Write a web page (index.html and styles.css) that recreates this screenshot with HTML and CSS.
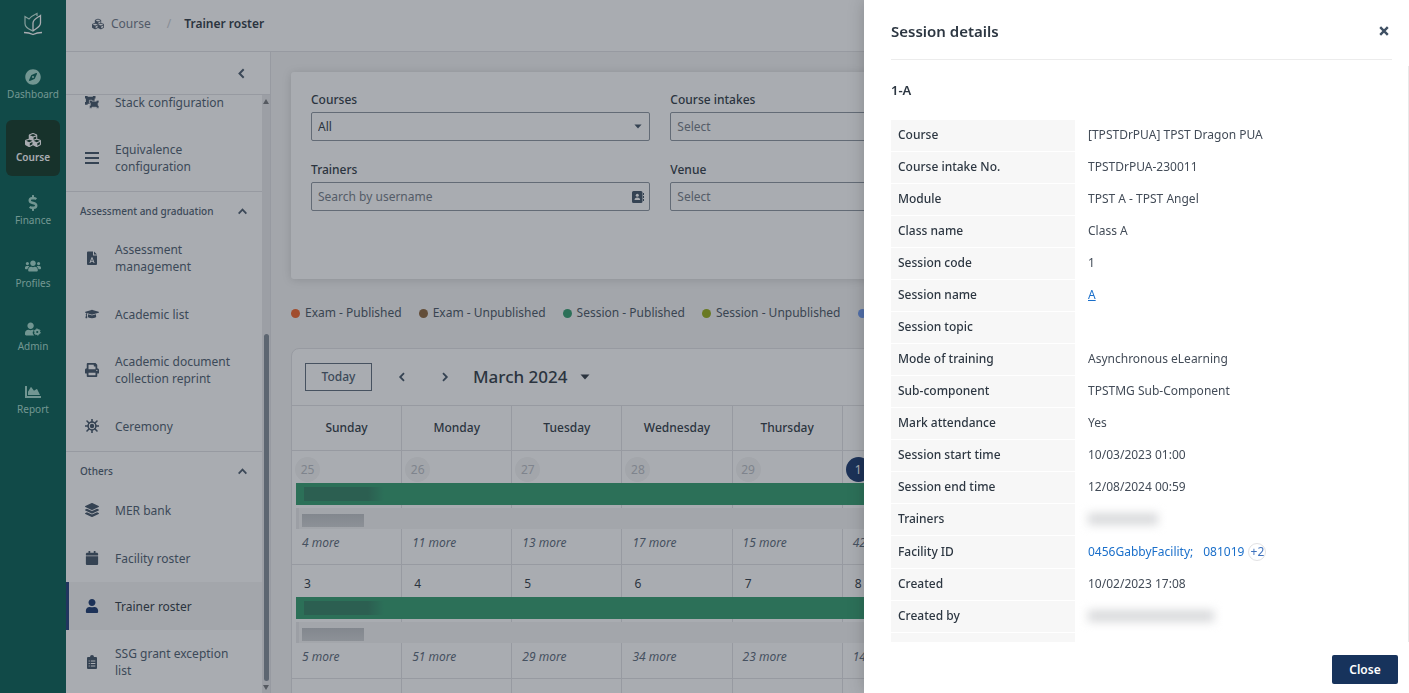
FILE: index.html
```html
<!DOCTYPE html>
<html lang="en">
<head>
    <meta charset="UTF-8">
    <meta name="viewport" content="width=device-width, initial-scale=1.0">
    <title>Trainer roster</title>
    <link rel="stylesheet" href="styles.css">
</head>
<body>
    <!-- Shared icons -->
    <svg class="sprite" aria-hidden="true">
        <symbol id="i-cubes" viewBox="0 0 512 512"><path d="M488.600 250.200L392 214V105.500c0-15-9.300-28.400-23.400-33.700l-100-37.500c-8.100-3.100-17.100-3.100-25.300 0l-100 37.500c-14.100 5.300-23.400 18.700-23.400 33.700V214l-96.600 36.200C9.300 255.500 0 268.900 0 283.900V394c0 13.600 7.700 26.100 19.900 32.200l100 50c10.100 5.100 22.100 5.100 32.200 0l103.900-52 103.900 52c10.100 5.100 22.100 5.100 32.200 0l100-50c12.200-6.100 19.900-18.600 19.900-32.200V283.900c0-15-9.300-28.400-23.400-33.700zM358 214.800l-85 31.900v-68.200l85-37v73.300zM154 104.100l102-38.200 102 38.200v.6l-102 41.400-102-41.400v-.6zm84 291.100l-85 42.500v-79.100l85-38.800v75.400zm0-112l-102 41.400-102-41.400v-.6l102-38.200 102 38.200v.6zm240 112l-85 42.500v-79.100l85-38.800v75.400zm0-112l-102 41.400-102-41.400v-.6l102-38.200 102 38.200v.6z"/></symbol>
        <symbol id="i-up" viewBox="0 0 10 10"><path d="M1.500 7L5 3.300L8.500 7" fill="none" stroke="currentColor" stroke-width="1.600"/></symbol>
        <symbol id="i-left" viewBox="0 0 10 10"><path d="M7 1.200L3.200 5L7 8.800" fill="none" stroke="currentColor" stroke-width="1.800"/></symbol>
        <symbol id="i-right" viewBox="0 0 10 10"><path d="M3 1.200L6.800 5L3 8.800" fill="none" stroke="currentColor" stroke-width="1.800"/></symbol>
        <symbol id="i-down" viewBox="0 0 10 6"><path d="M0.500 0.500h9L5 5.500z"/></symbol>
        <symbol id="i-user" viewBox="0 0 448 512"><path d="M224 256c70.700 0 128-57.300 128-128S294.700 0 224 0 96 57.300 96 128s57.300 128 128 128zm89.600 32h-16.700c-22.200 10.200-46.900 16-72.900 16s-50.600-5.800-72.900-16h-16.700C60.200 288 0 348.200 0 422.400V464c0 26.500 21.500 48 48 48h352c26.500 0 48-21.500 48-48v-41.600c0-74.200-60.200-134.400-134.400-134.400z"/></symbol>
    </svg>

    <div class="app">
        <nav class="nav">
            <a class="logo" href="#" aria-label="Home">
                <svg viewBox="0 0 18 24"><path d="M9 19.500V11c0-3.500 4-5 7.500-7.500V11c0 4-4 5-7.500 8M0 20.500c4 0 6 .5 9 2 3-1.500 5-2 9-2" fill="none" stroke="#fff" stroke-width="1.300"/><path d="M9 19c-4-2-8-3-8-7.500V4.500l4 2.500c2-3 5-4 8-5.500V4" fill="none" stroke="#c3e8dc" stroke-width="1.200"/></svg>
            </a>
            <a class="nav-item" href="#">
                <svg viewBox="0 0 496 512"><path d="M225.380 233.370c-12.500 12.500-12.500 32.760 0 45.250 12.490 12.500 32.760 12.500 45.250 0 12.500-12.500 12.500-32.760 0-45.250-12.500-12.490-32.760-12.490-45.250 0zM248 8C111.030 8 0 119.030 0 256s111.030 248 248 248 248-111.030 248-248S384.970 8 248 8zm126.140 148.050L308.170 300.400a31.938 31.938 0 0 1-15.770 15.770l-144.340 65.970c-16.650 7.610-33.810-9.550-26.200-26.200l65.980-144.350a31.938 31.938 0 0 1 15.770-15.770l144.340-65.970c16.650-7.600 33.800 9.550 26.190 26.200z"/></svg>
                Dashboard
            </a>
            <a class="nav-item active" href="#">
                <svg><use href="#i-cubes"/></svg>
                Course
            </a>
            <a class="nav-item" href="#">
                <svg viewBox="0 0 288 512"><path d="M209.200 233.400l-108-31.600C88.700 198.200 80 186.500 80 173.500c0-16.300 13.200-29.500 29.500-29.500h66.300c12.200 0 24.200 3.700 34.200 10.500 6.100 4.100 14.300 3.100 19.500-2l34.800-34c7.100-6.900 6.100-18.400-1.800-24.500C238 74.800 207.400 64.100 176 64V16c0-8.800-7.200-16-16-16h-32c-8.800 0-16 7.200-16 16v48h-2.500C45.800 64-5.400 118.700.5 183.600c4.200 46.100 39.400 83.600 83.800 96.600l102.500 30c12.500 3.700 21.200 15.300 21.200 28.300 0 16.300-13.200 29.500-29.500 29.500h-66.300C100 368 88 364.300 78 357.500c-6.100-4.100-14.300-3.100-19.500 2l-34.800 34c-7.100 6.900-6.100 18.400 1.800 24.500 24.500 19.200 55.100 29.900 86.500 30v48c0 8.800 7.200 16 16 16h32c8.800 0 16-7.200 16-16v-48.200c46.600-.9 90.300-28.600 105.700-72.700 21.500-61.600-14.600-124.800-72.500-141.700z"/></svg>
                Finance
            </a>
            <a class="nav-item" href="#">
                <svg viewBox="0 0 640 512"><path d="M96 224c35.300 0 64-28.700 64-64s-28.700-64-64-64-64 28.700-64 64 28.700 64 64 64zm448 0c35.300 0 64-28.700 64-64s-28.700-64-64-64-64 28.700-64 64 28.700 64 64 64zm32 32h-64c-17.600 0-33.500 7.100-45.100 18.600 40.300 22.100 68.900 62 75.100 109.400h66c17.700 0 32-14.300 32-32v-32c0-35.300-28.700-64-64-64zm-256 0c61.900 0 112-50.100 112-112S381.900 32 320 32 208 82.100 208 144s50.100 112 112 112zm76.800 32h-8.300c-20.800 10-43.900 16-68.500 16s-47.600-6-68.500-16h-8.300C179.600 288 128 339.600 128 403.200V432c0 26.500 21.500 48 48 48h288c26.500 0 48-21.500 48-48v-28.800c0-63.600-51.600-115.200-115.200-115.200zm-223.700-13.400C161.500 263.100 145.600 256 128 256H64c-35.300 0-64 28.700-64 64v32c0 17.700 14.300 32 32 32h65.900c6.300-47.400 34.900-87.300 75.200-109.400z"/></svg>
                Profiles
            </a>
            <a class="nav-item" href="#">
                <svg viewBox="0 0 640 512"><path d="M224 256c70.700 0 128-57.300 128-128S294.700 0 224 0 96 57.300 96 128s57.300 128 128 128zM313 288c-26 11-57 16-89 16s-63-5-89-16C60 288 0 348 0 422v42c0 26 21 48 48 48h322c-30-30-55-60-60-100-5-50 20-90 50-115-15-6-30-9-47-9z"/><circle cx="490" cy="376" r="80" fill="none" stroke="currentColor" stroke-width="72"/><circle cx="490" cy="376" r="126" fill="none" stroke="currentColor" stroke-width="34" stroke-dasharray="66 66"/></svg>
                Admin
            </a>
            <a class="nav-item" href="#">
                <svg viewBox="0 0 512 512"><path d="M500 384c6.600 0 12 5.400 12 12v40c0 6.600-5.400 12-12 12H12c-6.600 0-12-5.400-12-12V76c0-6.600 5.400-12 12-12h40c6.600 0 12 5.400 12 12v308h436zM372.700 159.500L288 216l-85.300-113.700c-5.100-6.800-15.500-6.300-19.900 1L96 248v104h384l-89.900-187.800c-3.200-6.500-11.400-8.700-17.400-4.700z"/></svg>
                Report
            </a>
        </nav>

        <div class="page">
            <header class="topbar">
                <a class="crumb" href="#"><svg><use href="#i-cubes"/></svg>Course</a>
                <span class="slash">/</span>
                <span class="crumb-current">Trainer roster</span>
            </header>

            <div class="body">
                <aside class="sidebar">
                    <div class="collapse">
                        <button type="button" aria-label="Collapse menu"><svg><use href="#i-left"/></svg></button>
                    </div>
                    <div class="menu-wrap">
                        <div class="menu">
                            <ul class="menu-scrolled">
                                <li><a href="#"><svg viewBox="0 0 16 14"><path d="M0 0h3v1h6V0h3v3h-1v4h1v2H3v1H0V7h1V3H0z"/><path d="M5 5h3v1h5V5h3v3h-1v3h1v3h-3v-1H8v1H5v-3h1V8H5z" stroke="#fff" stroke-width=".8"/></svg>Stack configuration</a></li>
                                <li><a href="#"><svg viewBox="0 0 14 14"><path d="M0 1h14v2h-14zM0 6h14v2h-14zM0 11h14v2h-14z"/></svg>Equivalence configuration</a></li>
                            </ul>
                            <button type="button" class="menu-title">Assessment and graduation<svg><use href="#i-up"/></svg></button>
                            <ul>
                                <li><a href="#"><svg viewBox="0 0 14 14"><path d="M2 1.500Q2 .5 3 .5H8V4.500h4V13q0 1-1 1H3q-1 0-1-1z"/><path d="M9 .5l3 3H9z"/><path d="M4.900 12L7 6.500L9.100 12M5.500 10.300h3" class="cut"/></svg>Assessment management</a></li>
                                <li><a href="#"><svg viewBox="0 0 640 512"><path d="M622.340 153.200L343.400 67.500c-15.200-4.670-31.600-4.670-46.790 0L17.660 153.200c-23.540 7.230-23.540 38.360 0 45.590l48.630 14.940c-10.670 13.190-17.230 29.280-17.880 46.900C38.780 266.150 32 276.110 32 288c0 10.780 5.680 19.850 13.860 25.650L20.330 428.530C18.110 438.520 25.710 448 35.940 448h56.110c10.240 0 17.840-9.480 15.620-19.470L82.140 313.650C90.320 307.850 96 298.780 96 288c0-11.570-6.470-21.250-15.660-26.870.76-15.020 8.440-28.300 20.690-36.720L296.600 284.500c9.060 2.780 26.440 6.250 46.790 0l278.950-85.700c23.550-7.240 23.550-38.360 0-45.600zM352.790 315.090c-28.530 8.760-52.840 3.920-65.590 0l-145.020-44.550L128 384c0 35.350 85.960 64 192 64s192-28.650 192-64l-14.180-113.470-145.030 44.560z"/></svg>Academic list</a></li>
                                <li><a href="#"><svg viewBox="0 0 512 512"><path d="M448 192V77.250c0-8.490-3.370-16.620-9.370-22.630L393.370 9.370c-6-6-14.140-9.370-22.630-9.370H96C78.330 0 64 14.330 64 32v160c-35.350 0-64 28.650-64 64v112c0 8.840 7.160 16 16 16h48v96c0 17.670 14.330 32 32 32h320c17.670 0 32-14.330 32-32v-96h48c8.840 0 16-7.160 16-16V256c0-35.350-28.650-64-64-64zm-64 256H128v-96h256v96zm0-224H128V64h192v48c0 8.840 7.160 16 16 16h48v96zm48 72c-13.250 0-24-10.750-24-24 0-13.260 10.750-24 24-24s24 10.740 24 24c0 13.250-10.750 24-24 24z"/></svg>Academic document collection reprint</a></li>
                                <li><a href="#"><svg viewBox="0 0 16 16"><circle cx="8" cy="8" r="4.500" fill="none" stroke="currentColor" stroke-width="1.800"/><circle cx="8" cy="8" r="2.500"/><path d="M8 0v3M8 13v3M0 8h3M13 8h3M2.300 2.300l2.200 2.200M11.500 11.500l2.200 2.200M2.300 13.700l2.200-2.200M11.500 4.500l2.200-2.200" stroke="currentColor" stroke-width="1.800" stroke-linecap="round"/></svg>Ceremony</a></li>
                            </ul>
                            <button type="button" class="menu-title">Others<svg><use href="#i-up"/></svg></button>
                            <ul>
                                <li><a href="#"><svg viewBox="0 0 512 512"><path d="M12.410 148.020l232.940 105.670c6.800 3.090 14.490 3.090 21.290 0l232.940-105.670c16.550-7.510 16.550-32.520 0-40.030L266.650 2.310a25.607 25.607 0 0 0-21.290 0L12.410 107.980c-16.550 7.510-16.550 32.530 0 40.040zm487.180 88.280l-58.090-26.330-161.640 73.270c-7.560 3.430-15.590 5.170-23.860 5.170s-16.290-1.740-23.860-5.170L70.510 209.970l-58.100 26.330c-16.550 7.500-16.550 32.500 0 40l232.940 105.590c6.800 3.080 14.490 3.080 21.290 0L499.590 276.300c16.550-7.500 16.550-32.500 0-40zm0 127.800l-57.870-26.230-161.860 73.370c-7.560 3.430-15.590 5.170-23.860 5.170s-16.290-1.740-23.860-5.170L70.290 337.870 12.410 364.100c-16.550 7.500-16.550 32.500 0 40l232.940 105.590c6.800 3.080 14.490 3.080 21.290 0L499.590 404.100c16.550-7.500 16.550-32.500 0-40z"/></svg>MER bank</a></li>
                                <li><a href="#"><svg viewBox="0 0 448 512"><path d="M12 192h424c6.600 0 12 5.400 12 12v260c0 26.500-21.500 48-48 48H48c-26.500 0-48-21.500-48-48V204c0-6.600 5.400-12 12-12zm436-44v-36c0-26.500-21.500-48-48-48h-48V12c0-6.600-5.400-12-12-12h-40c-6.600 0-12 5.400-12 12v52H160V12c0-6.600-5.400-12-12-12h-40c-6.600 0-12 5.400-12 12v52H48C21.500 64 0 85.500 0 112v36c0 6.600 5.400 12 12 12h424c6.600 0 12-5.400 12-12z"/></svg>Facility roster</a></li>
                                <li><a href="#" class="selected"><svg><use href="#i-user"/></svg>Trainer roster</a></li>
                                <li><a href="#"><svg viewBox="0 0 14 14"><path d="M3 2h2q0-2 2-2t2 2h2q1 0 1 1v10q0 1-1 1H3q-1 0-1-1V3q0-1 1-1z"/><path d="M5.800 6h4.500M5.800 8.500h4.500M5.800 11h4.500M3.700 6h1M3.700 8.500h1M3.700 11h1" class="cut"/></svg>SSG grant exception list</a></li>
                            </ul>
                        </div>
                        <div class="scrollbar" aria-hidden="true">
                            <svg viewBox="0 0 6 5"><path d="M3 0l3 5H0z"/></svg>
                            <div class="before"></div>
                            <div class="thumb"></div>
                            <svg viewBox="0 0 6 5"><path d="M0 0h6L3 5z"/></svg>
                        </div>
                    </div>
                </aside>

                <main class="content">
                    <form class="filters">
                        <div class="field">
                            <label for="courses">Courses</label>
                            <div class="control">
                                <select id="courses"><option>All</option></select>
                                <svg class="caret"><use href="#i-down"/></svg>
                            </div>
                        </div>
                        <div class="field">
                            <label for="intakes">Course intakes</label>
                            <div class="control">
                                <select id="intakes" class="empty"><option>Select</option></select>
                                <svg class="caret"><use href="#i-down"/></svg>
                            </div>
                        </div>
                        <div class="field">
                            <label for="modules">Modules</label>
                            <div class="control">
                                <select id="modules" class="empty"><option>Select</option></select>
                                <svg class="caret"><use href="#i-down"/></svg>
                            </div>
                        </div>
                        <div class="field">
                            <label for="trainers">Trainers</label>
                            <div class="control">
                                <input id="trainers" type="text" placeholder="Search by username">
                                <svg class="book" viewBox="0 0 12 12"><path d="M1.500 0h7.500q1.500 0 1.500 1.500v9q0 1.500-1.500 1.500h-7.500q-1.500 0-1.500-1.500v-9q0-1.500 1.500-1.500zM11 2h1v2h-1zM11 5h1v2h-1zM11 8h1v2h-1z"/><circle cx="5.300" cy="4.300" r="1.500" class="hole"/><path d="M2.500 9q0-2.600 2.800-2.600T8.100 9z" class="hole"/></svg>
                            </div>
                        </div>
                        <div class="field">
                            <label for="venue">Venue</label>
                            <div class="control">
                                <select id="venue" class="empty"><option>Select</option></select>
                                <svg class="caret"><use href="#i-down"/></svg>
                            </div>
                        </div>
                    </form>

                    <ul class="legend">
                        <li class="exam-published">Exam - Published</li>
                        <li class="exam-unpublished">Exam - Unpublished</li>
                        <li class="session-published">Session - Published</li>
                        <li class="session-unpublished">Session - Unpublished</li>
                        <li class="other">Others</li>
                    </ul>

                    <section class="calendar">
                        <div class="toolbar">
                            <button type="button" class="today">Today</button>
                            <button type="button" class="arrow" aria-label="Previous month"><svg><use href="#i-left"/></svg></button>
                            <button type="button" class="arrow" aria-label="Next month"><svg><use href="#i-right"/></svg></button>
                            <button type="button" class="month">March 2024<svg><use href="#i-down"/></svg></button>
                        </div>
                        <table class="month-grid">
                            <thead>
                                <tr>
                                    <th>Sunday</th>
                                    <th>Monday</th>
                                    <th>Tuesday</th>
                                    <th>Wednesday</th>
                                    <th>Thursday</th>
                                    <th>Friday</th>
                                    <th>Saturday</th>
                                </tr>
                            </thead>
                            <tbody>
                                <tr>
                                    <td><span class="date out">25</span><div class="event"><i></i></div><div class="event light"><i></i></div><a href="#">4 more</a></td>
                                    <td><span class="date out">26</span><div class="event"></div><div class="event light"></div><a href="#">11 more</a></td>
                                    <td><span class="date out">27</span><div class="event"></div><div class="event light"></div><a href="#">13 more</a></td>
                                    <td><span class="date out">28</span><div class="event"></div><div class="event light"></div><a href="#">17 more</a></td>
                                    <td><span class="date out">29</span><div class="event"></div><div class="event light"></div><a href="#">15 more</a></td>
                                    <td><span class="date now">1</span><div class="event"></div><div class="event light"></div><a href="#">42 more</a></td>
                                    <td><span class="date">2</span><div class="event"></div><div class="event light"></div><a href="#">12 more</a></td>
                                </tr>
                                <tr>
                                    <td><span class="date">3</span><div class="event"><i></i></div><div class="event light"><i></i></div><a href="#">5 more</a></td>
                                    <td><span class="date">4</span><div class="event"></div><div class="event light"></div><a href="#">51 more</a></td>
                                    <td><span class="date">5</span><div class="event"></div><div class="event light"></div><a href="#">29 more</a></td>
                                    <td><span class="date">6</span><div class="event"></div><div class="event light"></div><a href="#">34 more</a></td>
                                    <td><span class="date">7</span><div class="event"></div><div class="event light"></div><a href="#">23 more</a></td>
                                    <td><span class="date">8</span><div class="event"></div><div class="event light"></div><a href="#">14 more</a></td>
                                    <td><span class="date">9</span><div class="event"></div><div class="event light"></div><a href="#">12 more</a></td>
                                </tr>
                                <tr>
                                    <td></td><td></td><td></td><td></td><td></td><td></td><td></td>
                                </tr>
                            </tbody>
                        </table>
                    </section>
                </main>
            </div>
        </div>
    </div>

    <div class="backdrop"></div>

    <section class="drawer" role="dialog" aria-labelledby="drawer-title">
        <header class="drawer-header">
            <h2 id="drawer-title">Session details</h2>
            <button type="button" aria-label="Close details"><svg viewBox="0 0 10 10"><path d="M1.200 1.200l7.600 7.600M8.800 1.200l-7.600 7.600" stroke="currentColor" stroke-width="2.400"/></svg></button>
        </header>
        <div class="drawer-body">
            <h3>1-A</h3>
            <table class="details">
                <tr><th scope="row">Course</th><td>[TPSTDrPUA] TPST Dragon PUA</td></tr>
                <tr><th scope="row">Course intake No.</th><td>TPSTDrPUA-230011</td></tr>
                <tr><th scope="row">Module</th><td>TPST A - TPST Angel</td></tr>
                <tr><th scope="row">Class name</th><td>Class A</td></tr>
                <tr><th scope="row">Session code</th><td>1</td></tr>
                <tr><th scope="row">Session name</th><td><a class="underlined" href="#">A</a></td></tr>
                <tr><th scope="row">Session topic</th><td></td></tr>
                <tr><th scope="row">Mode of training</th><td>Asynchronous eLearning</td></tr>
                <tr><th scope="row">Sub-component</th><td>TPSTMG Sub-Component</td></tr>
                <tr><th scope="row">Mark attendance</th><td>Yes</td></tr>
                <tr><th scope="row">Session start time</th><td>10/03/2023 01:00</td></tr>
                <tr><th scope="row">Session end time</th><td>12/08/2024 00:59</td></tr>
                <tr><th scope="row">Trainers</th><td><span class="masked"></span></td></tr>
                <tr><th scope="row">Facility ID</th><td><div class="facilities"><a href="#">0456GabbyFacility;</a><a href="#">081019</a><button type="button">+2</button></div></td></tr>
                <tr><th scope="row">Created</th><td>10/02/2023 17:08</td></tr>
                <tr><th scope="row">Created by</th><td><span class="masked long"></span></td></tr>
                <tr><th scope="row"></th><td></td></tr>
            </table>
        </div>
        <footer class="drawer-footer">
            <button type="button">Close</button>
        </footer>
    </section>
</body>
</html>
```
FILE: styles.css
```css
* {
    box-sizing: border-box;
}
body {
    margin: 0;
    font-family: "Noto Sans", "Open Sans", sans-serif;
    font-size: 12px;
    line-height: 18px;
    color: #2d3742;
    overflow: hidden;
}
a {
    color: inherit;
    text-decoration: none;
}
button, input, select {
    font: inherit;
    color: inherit;
}
button {
    padding: 0;
    border: 0;
    background: none;
    cursor: pointer;
}
ul {
    margin: 0;
    padding: 0;
    list-style: none;
}
svg {
    fill: currentColor;
    flex-shrink: 0;
}
.sprite {
    display: none;
}
.app {
    display: flex;
    height: 100vh;
}

/* Left navigation */
.nav {
    width: 66px;
    flex-shrink: 0;
    display: flex;
    flex-direction: column;
    align-items: center;
    gap: 7px;
    background-color: #035c50;
    color: #a3dbcb;
}
.logo {
    height: 50px;
    padding-top: 12px;
}
.logo svg {
    width: 18px;
    height: 24px;
}
.nav-item {
    width: 54px;
    height: 56px;
    display: flex;
    flex-direction: column;
    align-items: center;
    padding-top: 12px;
    gap: 1px;
    border-radius: 6px;
    font-size: 10px;
    line-height: 16px;
}
.nav-item svg {
    width: 16px;
    height: 16px;
}
.nav-item.active {
    background-color: #0d3421;
    color: #fff;
    font-weight: 600;
}

/* Top bar */
.page {
    flex: 1;
    min-width: 0;
    display: flex;
    flex-direction: column;
}
.topbar {
    height: 52px;
    flex-shrink: 0;
    display: flex;
    align-items: center;
    padding: 0 26px 4px;
    border-bottom: 1px solid #e2e2e4;
    background-color: #fff;
}
.crumb {
    display: flex;
    align-items: center;
    gap: 7px;
    color: #6d7684;
}
.crumb svg {
    width: 12px;
    height: 12px;
    color: #4c5a6b;
}
.slash {
    margin: 0 13px 0 16px;
    color: #c8ccd2;
}
.crumb-current {
    font-weight: 600;
}

/* Side menu */
.body {
    flex: 1;
    min-height: 0;
    display: flex;
}
.sidebar {
    width: 205px;
    flex-shrink: 0;
    display: flex;
    flex-direction: column;
    border-right: 1px solid #e2e2e4;
    background-color: #fff;
    color: #4a5a6c;
}
.collapse {
    height: 43px;
    flex-shrink: 0;
    display: flex;
    justify-content: flex-end;
    align-items: center;
    padding-right: 23px;
    border-bottom: 1px solid #e2e2e4;
}
.collapse svg {
    display: block;
    width: 11px;
    height: 11px;
}
.menu-wrap {
    flex: 1;
    min-height: 0;
    display: flex;
}
.menu {
    flex: 1;
    overflow: hidden;
}
.menu ul {
    padding-bottom: 1px;
}
.menu-scrolled {
    margin-top: -17px;
}
.menu a {
    display: flex;
    align-items: center;
    min-height: 48px;
    padding: 15px 16px;
    border-left: 3px solid transparent;
    line-height: 17px;
}
.menu a svg {
    width: 14px;
    height: 14px;
    margin-right: 16px;
    color: #3f5063;
}
.menu a.selected {
    border-left-color: #1b3a75;
    background-color: #f5f5f5;
    color: #2d3742;
}
.menu a.selected svg {
    color: #16356b;
}
.cut {
    fill: none;
    stroke: #fff;
    stroke-width: 1;
}
.menu-title {
    width: 100%;
    display: flex;
    justify-content: space-between;
    align-items: center;
    padding: 11px 14px 6px;
    border-top: 1px solid #e2e2e4;
    font-size: 10px;
    font-weight: 500;
    line-height: 17px;
}
.menu-title svg {
    width: 11px;
    height: 11px;
}
.scrollbar {
    width: 8px;
    display: flex;
    flex-direction: column;
    align-items: center;
    padding: 4px 0 3px;
    background-color: #e9eaeb;
}
.scrollbar svg {
    width: 6px;
    height: 5px;
    color: #75777a;
}
.before {
    flex: 230;
}
.thumb {
    flex: 347;
    width: 5px;
    margin-bottom: 4px;
    border-radius: 3px;
    background-color: #808a94;
}

/* Filters */
.content {
    flex: 1;
    min-width: 0;
    padding: 20px 20px 0;
    background-color: #f5f5f5;
    overflow: hidden;
}
.filters {
    display: grid;
    grid-template-columns: repeat(3, 1fr);
    gap: 20px;
    padding: 19px 20px 68px;
    border-radius: 3px;
    background-color: #fff;
    box-shadow: 0 1px 10px rgba(0,0,0,0.15);
}
.field label {
    display: block;
    margin-bottom: 3px;
    font-weight: 500;
}
.control {
    display: flex;
    align-items: center;
    border: 1px solid #8b939d;
    border-radius: 2px;
}
.control select, .control input {
    flex: 1;
    min-width: 0;
    height: 27px;
    padding: 0 6px;
    border: 0;
    background: none;
    appearance: none;
    outline: none;
}
.control select.empty, .control input::placeholder {
    color: #737b85;
}
.control svg {
    color: #3f5063;
}
.caret {
    width: 8px;
    height: 5px;
    margin-right: 7px;
}
.book {
    width: 12px;
    height: 12px;
    margin-right: 5px;
}
.hole {
    fill: #fff;
}

/* Legend */
.legend {
    display: flex;
    gap: 17px;
    margin-top: 25px;
    white-space: nowrap;
}
.legend li {
    display: flex;
    align-items: center;
    gap: 5px;
    color: #46535f;
}
.legend li::before {
    content: "";
    width: 9px;
    height: 9px;
    border-radius: 50%;
}
.exam-published::before {
    background-color: #f26226;
}
.exam-unpublished::before {
    background-color: #8b6338;
}
.session-published::before {
    background-color: #309b6c;
}
.session-unpublished::before {
    background-color: #94ab12;
}
.other::before {
    background-color: #6f9cf5;
}

/* Calendar */
.calendar {
    margin: 26px 325px 0 0;
    border: 1px solid #e2e2e4;
    border-radius: 8px 8px 0 0;
    background-color: #fff;
}
.toolbar {
    height: 56px;
    display: flex;
    align-items: center;
    padding-left: 13px;
}
.today {
    width: 67px;
    height: 28px;
    border: 1px solid #5c6a79;
    color: #4a5a6c;
    font-weight: 500;
}
.arrow {
    width: 12px;
    margin-left: 24px;
}
.arrow + .arrow {
    margin-left: 31px;
}
.arrow svg {
    display: block;
    width: 12px;
    height: 10px;
    color: #3f5063;
}
.month {
    display: flex;
    align-items: center;
    gap: 12px;
    margin-left: 22px;
    font-size: 17px;
    font-weight: 500;
}
.month svg {
    width: 10px;
    height: 6px;
}
.month-grid {
    width: 100%;
    table-layout: fixed;
    border-collapse: separate;
    border-spacing: 0;
}
.month-grid th, .month-grid td {
    border-top: 1px solid #e2e2e4;
    border-right: 1px solid #e2e2e4;
    padding: 0;
}
.month-grid th {
    height: 45px;
    font-weight: 500;
}
.month-grid td {
    height: 114px;
    vertical-align: top;
}
.date {
    display: block;
    width: 25px;
    height: 25px;
    margin: 6px 0 1px 3px;
    border-radius: 50%;
    line-height: 25px;
    text-align: center;
}
.date.out {
    background-color: #f5f5f5;
    color: #b9bdc3;
}
.date.now {
    background-color: #16356b;
    color: #fff;
}
.event {
    height: 22px;
    margin-left: -1px;
    margin-bottom: 3px;
    background-color: #309b6c;
}
.event.light {
    height: 21px;
    margin-bottom: 0;
    background-color: #f5f5f5;
}
.month-grid td:first-child .event {
    margin-left: 4px;
    padding: 4px 0 0 8px;
}
.month-grid td:first-child .event.light {
    padding: 6px 0 0 3px;
    border-left: 3px solid #e9eaeb;
}
.event i {
    display: block;
    width: 80px;
    height: 14px;
    background: linear-gradient(90deg, #307f60 80%, #309b6c);
}
.event.light i {
    width: 62px;
    height: 13px;
    background: linear-gradient(#bfc2c5, #d0d2d4);
}
.month-grid td a {
    display: block;
    padding: 5px 0 0 10px;
    color: #5a6878;
    font-style: italic;
}

/* Session drawer */
.backdrop {
    position: fixed;
    inset: 0;
    background-color: rgba(40,48,60,0.4);
}
.drawer {
    position: fixed;
    top: 0;
    right: 0;
    bottom: 0;
    width: 545px;
    max-width: 100%;
    display: flex;
    flex-direction: column;
    background-color: #fff;
    box-shadow: 0 0 16px rgba(0,0,0,0.2);
}
.drawer-header {
    height: 60px;
    flex-shrink: 0;
    display: flex;
    justify-content: space-between;
    align-items: center;
    margin: 0 17px 6px 27px;
    padding: 2px 3px 0 0;
    border-bottom: 1px solid #ececec;
}
.drawer-header h2 {
    margin: 0;
    font-size: 15px;
    font-weight: 600;
}
.drawer-header svg {
    display: block;
    width: 10px;
    height: 10px;
    color: #3f5063;
}
.drawer-body {
    flex: 1;
    min-height: 0;
    padding: 12px 17px 0 27px;
    border-right: 1px solid #e9e9e9;
    overflow: hidden;
}
.drawer-body h3 {
    margin: 0 0 18px;
    font-size: 13px;
    font-weight: 600;
    line-height: 24px;
}
.details {
    width: 100%;
    border-collapse: separate;
    border-spacing: 0;
}
.details th {
    width: 184px;
    height: 32px;
    padding: 0 7px 1px;
    border-bottom: 1px solid #fff;
    background-color: #f7f7f7;
    font-weight: 500;
    text-align: left;
}
.details td {
    padding: 0 13px 2px;
    color: #434c58;
}
.details a {
    color: #1a6fca;
}
.details a.underlined {
    text-decoration: underline;
}
.facilities {
    display: flex;
    align-items: center;
    gap: 10px;
    min-height: 31px;
}
.facilities button {
    width: 18px;
    height: 18px;
    margin-left: -6px;
    border: 1px solid #e2e2e4;
    border-radius: 50%;
    color: #3f72bd;
    line-height: 16px;
    display: flex;
    justify-content: center;
}
.masked {
    display: block;
    width: 70px;
    height: 12px;
    background-color: #d9dadc;
    filter: blur(5px);
}
.masked.long {
    width: 126px;
}
.drawer-footer {
    height: 51px;
    flex-shrink: 0;
    display: flex;
    justify-content: flex-end;
    align-items: center;
    padding: 4px 11px 0 0;
}
.drawer-footer button {
    width: 66px;
    height: 29px;
    border-radius: 2px;
    background-color: #17335c;
    color: #fff;
    font-weight: 600;
}
```
